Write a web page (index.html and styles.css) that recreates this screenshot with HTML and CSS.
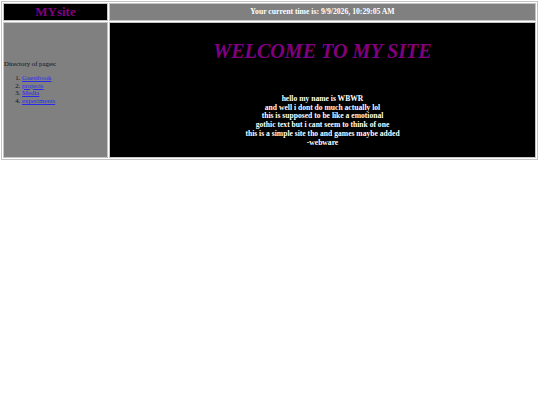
FILE: index.html
```html
<!DOCTYPE html>
<html>
<head>
<meta charset="utf-8">
<title>MYsite</title>
<link rel="stylesheet" href="styles.css">
</head>
<body>
<table class="layout">
  <tr>
    <td class="logo">MYsite</td>
    <td class="clock">Your current time is: 9/9/2026, 10:29:05 AM</td>
  </tr>
  <tr>
    <td class="side">
      <p class="dir">Directory of pages:</p>
      <ol class="pages">
        <li><a href="#">Guestbook</a></li>
        <li><a href="#">projects</a></li>
        <li><a href="#">Media</a></li>
        <li><a href="#">experiments</a></li>
      </ol>
    </td>
    <td class="main">
      <h1 class="welcome">WELCOME TO MY SITE</h1>
      <p class="intro">hello my name is WBWR<br>and well i dont do much actually lol<br>this is supposed to be like a emotional<br>gothic text but i cant seem to think of one<br>this is a simple site tho and games maybe added<br>-webware</p>
    </td>
  </tr>
</table>
</body>
</html>
```
FILE: styles.css
```css
html, body {
  background: #ffffff;
}
body {
  margin: 1px;
  font-family: "Liberation Serif", "Times New Roman", serif;
}
.layout {
  width: 537px;
  border: 1px solid #c4c4c4;
  border-spacing: 1px;
}
.layout td {
  border: 1px solid #c4c4c4;
  padding: 0;
}
.logo {
  width: 103px;
  height: 16px;
  background: #000000;
  color: #800080;
  font-weight: bold;
  font-size: 13px;
  line-height: 16px;
  text-align: center;
}
.clock {
  background: #808080;
  color: #ffffff;
  font-weight: bold;
  font-size: 7.7px;
  line-height: 16px;
  text-align: center;
}
.side {
  background: #808080;
  vertical-align: top;
  padding-top: 37px !important;
  font-size: 6.8px;
  color: #111111;
}
.dir {
  margin: 0 0 6px 0;
  line-height: 8px;
}
.pages {
  margin: 0;
  padding-left: 18px;
  line-height: 7.7px;
}
.pages a {
  color: #2a2aee;
}
.main {
  height: 134px;
  background: #000000;
  text-align: center;
  vertical-align: top;
}
.welcome {
  margin: 15px 0 0 0;
  color: #800080;
  font-style: italic;
  font-weight: bold;
  font-size: 20.1px;
  line-height: 26px;
}
.intro {
  margin: 31px 0 0 0;
  color: #ffffff;
  font-weight: bold;
  font-size: 7.6px;
  line-height: 8.7px;
}
```
